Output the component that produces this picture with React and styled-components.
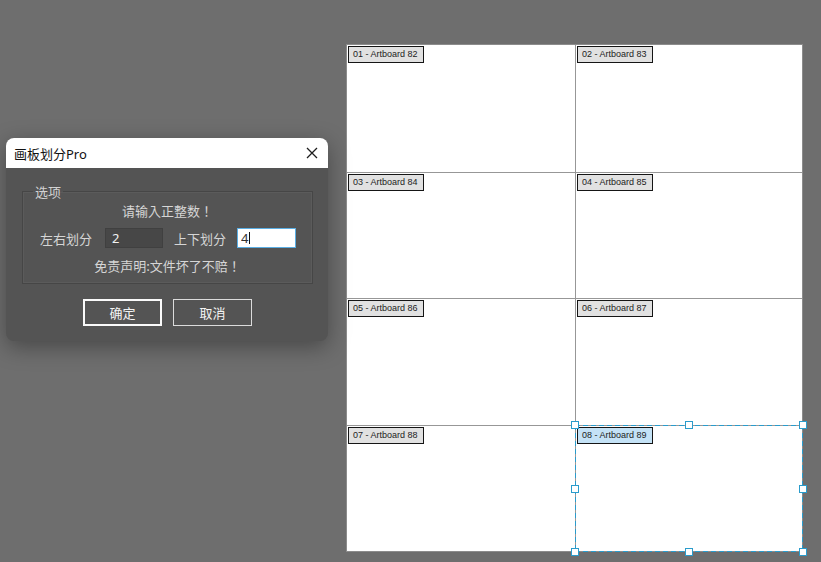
import styled, { createGlobalStyle } from "styled-components";

const GlobalStyle = createGlobalStyle`
  html, body {
    margin: 0;
    padding: 0;
    background: #6e6e6e;
  }
  body {
    font-family: "Noto Sans", "Noto Sans CJK SC", sans-serif;
  }
`;

const boards = [
  "01 - Artboard 82",
  "02 - Artboard 83",
  "03 - Artboard 84",
  "04 - Artboard 85",
  "05 - Artboard 86",
  "06 - Artboard 87",
  "07 - Artboard 88",
  "08 - Artboard 89",
];

const handles = [
  [0, 0], [50, 0], [100, 0],
  [0, 50], [100, 50],
  [0, 100], [50, 100], [100, 100],
];

const CloseIcon = () => (
  <svg width="12" height="12" viewBox="0 0 12 12">
    <path d="M1 1L11 11M11 1L1 11" stroke="#1e1e1e" strokeWidth="1.3" fill="none" />
  </svg>
);

const App = () => {
  return (
    <Workspace>
      <GlobalStyle />
      <Canvas>
        {boards.map((name, i) => {
          const selected = i === boards.length - 1;
          return (
            <Artboard key={name}>
              <BoardLabel $selected={selected}>{name}</BoardLabel>
              {selected && (
                <Selection>
                  {handles.map(([x, y]) => (
                    <Handle key={`${x}-${y}`} style={{ left: `${x}%`, top: `${y}%` }} />
                  ))}
                </Selection>
              )}
            </Artboard>
          );
        })}
      </Canvas>

      <Dialog>
        <TitleBar>
          <span>画板划分Pro</span>
          <CloseButton>
            <CloseIcon />
          </CloseButton>
        </TitleBar>
        <Body>
          <Group>
            <Legend>选项</Legend>
            <Line>请输入正整数！</Line>
            <FieldRow>
              <FieldLabel $gap="13px">左右划分</FieldLabel>
              <NumberInput value="2" readOnly />
              <FieldLabel $gap="11px">上下划分</FieldLabel>
              <Caret>
                <NumberInput value="4" readOnly $active />
              </Caret>
            </FieldRow>
            <Line>免责声明:文件坏了不赔！</Line>
          </Group>
          <Buttons>
            <Button $primary>确定</Button>
            <Button>取消</Button>
          </Buttons>
        </Body>
      </Dialog>
    </Workspace>
  );
};

export default App;

const Workspace = styled.div`
  position: relative;
  width: 821px;
  height: 562px;
  box-sizing: border-box;
  padding: 44px 0 0 346px;
  background: #6e6e6e;
  overflow: hidden;
`;

const Canvas = styled.div`
  display: grid;
  grid-template-columns: 228px 226px;
  grid-template-rows: 127px 125px 126px 125px;
  gap: 1px;
  width: max-content;
  background: #979797;
  border: 1px solid #8c8c8c;
`;

const Artboard = styled.div`
  position: relative;
  display: flex;
  align-items: flex-start;
  background: #fff;
  padding: 1px;
`;

const BoardLabel = styled.div`
  height: 15px;
  line-height: 15px;
  padding: 0 5px 0 4px;
  border: 1px solid #151515;
  background: ${(p) => (p.$selected ? "#c4e2f6" : "#e1e1e1")};
  color: #1c1c1c;
  font-family: "Liberation Sans", Arial, sans-serif;
  font-size: 9px;
  white-space: nowrap;
`;

const dash = "#2a9ccc";

const Selection = styled.div`
  position: absolute;
  inset: -1px;
  pointer-events: none;
  background:
    repeating-linear-gradient(90deg, ${dash} 0 5px, transparent 5px 8px) top left / 100% 1px no-repeat,
    repeating-linear-gradient(90deg, ${dash} 0 5px, transparent 5px 8px) bottom left / 100% 1px no-repeat,
    repeating-linear-gradient(180deg, ${dash} 0 5px, transparent 5px 8px) top left / 1px 100% no-repeat,
    repeating-linear-gradient(180deg, ${dash} 0 5px, transparent 5px 8px) top right / 1px 100% no-repeat;
`;

const Handle = styled.span`
  position: absolute;
  width: 6px;
  height: 6px;
  margin: -4px 0 0 -4px;
  background: #fff;
  border: 1px solid ${dash};
`;

const Dialog = styled.div`
  position: absolute;
  left: 6px;
  top: 138px;
  width: 322px;
  border-radius: 8px;
  overflow: hidden;
  background: #545454;
  box-shadow: 0 6px 22px rgba(0, 0, 0, 0.35);
  font-family: "Noto Sans", "Noto Sans CJK SC", sans-serif;
`;

const TitleBar = styled.div`
  display: flex;
  align-items: center;
  justify-content: space-between;
  height: 30px;
  padding: 0 10px 0 8px;
  background: #fff;
  color: #111;
  font-size: 13px;
`;

const CloseButton = styled.span`
  display: flex;
  align-items: center;
  justify-content: center;
  width: 12px;
  height: 12px;
`;

const Body = styled.div`
  padding: 15px 15px 15px 16px;
`;

const Group = styled.fieldset`
  display: flex;
  flex-direction: column;
  align-items: center;
  gap: 9px;
  margin: 0;
  padding: 2px 10px 9px;
  border: 1px solid #464646;
  box-shadow: inset 0 0 0 1px #5b5b5b;
  color: #d6d6d6;
  font-family: "Noto Sans CJK SC", sans-serif;
  font-size: 13px;
`;

const Legend = styled.legend`
  padding: 0 2px;
  line-height: 17px;
  color: #d2d2d2;
  font-size: 13px;
`;

/* TC keeps full-width punctuation centred in its cell */
const Line = styled.div`
  line-height: 17px;
  font-family: "Noto Sans CJK TC", "Noto Sans CJK SC", sans-serif;
`;

const FieldRow = styled.div`
  display: flex;
  align-items: center;
  margin-left: 1px;
`;

const FieldLabel = styled.span`
  line-height: 17px;
  margin-right: ${(p) => p.$gap};

  & + input {
    margin-right: 11px;
  }
`;

const Caret = styled.span`
  position: relative;
  display: flex;

  &::after {
    content: "";
    position: absolute;
    left: 12px;
    top: 4px;
    width: 1px;
    height: 12px;
    background: #111;
  }
`;

const NumberInput = styled.input`
  box-sizing: border-box;
  width: ${(p) => (p.$active ? "59px" : "58px")};
  height: 20px;
  padding: 0 ${(p) => (p.$active ? "3px" : "6px")};
  border: 1px solid ${(p) => (p.$active ? "#5aaee4" : "#404040")};
  background: ${(p) => (p.$active ? "#fff" : "#474747")};
  color: ${(p) => (p.$active ? "#333" : "#f2f2f2")};
  font-family: "Noto Sans", sans-serif;
  font-size: 13px;
  outline: none;
`;

const Buttons = styled.div`
  display: flex;
  justify-content: center;
  gap: 11px;
  margin-top: 15px;
`;

const Button = styled.button`
  box-sizing: border-box;
  width: 79px;
  height: 27px;
  padding: 0;
  background: transparent;
  border: ${(p) => (p.$primary ? "2px solid #fafafa" : "1px solid #dcdcdc")};
  color: #f4f4f4;
  font-family: "Noto Sans CJK SC", sans-serif;
  font-size: 13px;
`;
